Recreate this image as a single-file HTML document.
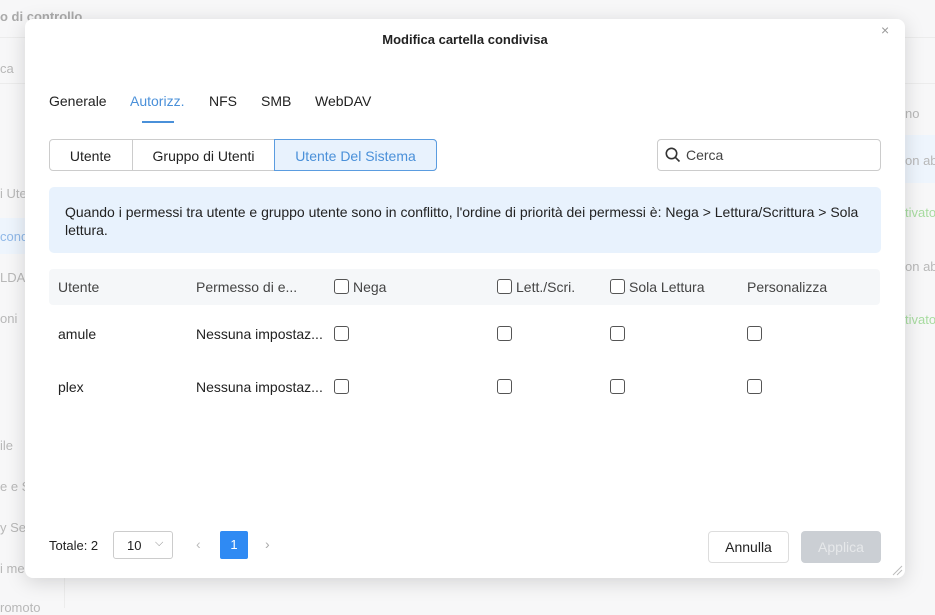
<!DOCTYPE html>
<html><head><meta charset="utf-8"><style>
*{box-sizing:border-box;margin:0;padding:0}
body{width:935px;height:608px;overflow:hidden;background:#f7f7f8;font-family:"Liberation Sans",sans-serif;position:relative;color:#222}
.bg{position:absolute;color:#b8b8b8;font-size:13px;white-space:nowrap}
.modal{position:absolute;left:25px;top:19px;width:880px;height:559px;background:#fff;border-radius:8px;box-shadow:0 4px 20px rgba(0,0,0,.15)}
.a{position:absolute;white-space:nowrap;font-size:14px}
.cb{position:absolute;width:15px;height:15px;border:1px solid #555;border-radius:3px;background:#fff}
</style></head><body>
<div class="bg" style="left:0;top:9px;font-weight:bold;color:#aaa">o di controllo</div>
<div style="position:absolute;left:0;top:37px;width:935px;height:1px;background:#ececec"></div>
<div class="bg" style="left:0;top:61px">ca</div>
<div style="position:absolute;left:0;top:83px;width:935px;height:1px;background:#ececec"></div>
<div class="bg" style="left:0;top:186px">i Ute</div>
<div style="position:absolute;left:0;top:218px;width:25px;height:36px;background:#eef5fd"></div>
<div class="bg" style="left:0;top:229px;color:#8fb8e8">cond</div>
<div class="bg" style="left:0;top:270px">LDA</div>
<div class="bg" style="left:0;top:311px">oni</div>
<div class="bg" style="left:0;top:438px">ile</div>
<div class="bg" style="left:0;top:479px">e e S</div>
<div class="bg" style="left:0;top:520px">y Se</div>
<div class="bg" style="left:0;top:561px">i me</div>
<div class="bg" style="left:0;top:600px">romoto</div>
<div style="position:absolute;left:64px;top:578px;width:1px;height:30px;background:#ececec"></div>
<div class="bg" style="left:905px;top:106px">no</div>
<div style="position:absolute;left:905px;top:135px;width:30px;height:48px;background:#eef5fd"></div>
<div class="bg" style="left:905px;top:153px">on ab</div>
<div class="bg" style="left:905px;top:205px;color:#a8dca0">tivato</div>
<div class="bg" style="left:905px;top:259px">on ab</div>
<div class="bg" style="left:905px;top:312px;color:#a8dca0">tivato</div>

<div class="modal">
<div class="a" style="left:0;width:880px;text-align:center;top:13px;font-weight:bold;font-size:13px">Modifica cartella condivisa</div>
<div class="a" style="left:856px;top:3px;color:#999;font-size:14px">×</div>
<div class="a" style="left:24px;top:74px;font-size:14px">Generale</div>
<div class="a" style="left:105px;top:74px;font-size:14px;color:#4a90d9">Autorizz.</div>
<div style="position:absolute;left:117px;top:102px;width:32px;height:2px;background:#4a90d9"></div>
<div class="a" style="left:184px;top:74px;font-size:14px">NFS</div>
<div class="a" style="left:236px;top:74px;font-size:14px">SMB</div>
<div class="a" style="left:290px;top:74px;font-size:14px">WebDAV</div>

<div style="position:absolute;left:24px;top:120px;width:388px;height:32px;border:1px solid #ccc;border-radius:4px"></div>
<div style="position:absolute;left:107px;top:120px;width:1px;height:32px;background:#ccc"></div>
<div style="position:absolute;left:249px;top:120px;width:163px;height:32px;border:1px solid #5a9ce0;border-radius:0 4px 4px 0;background:#e8f2fd"></div>
<div class="a" style="left:24px;width:83px;text-align:center;top:129px;font-size:14px">Utente</div>
<div class="a" style="left:108px;width:141px;text-align:center;top:129px;font-size:14px">Gruppo di Utenti</div>
<div class="a" style="left:249px;width:163px;text-align:center;top:129px;font-size:14px;color:#4a90d9">Utente Del Sistema</div>

<div style="position:absolute;left:632px;top:120px;width:224px;height:32px;border:1px solid #ccc;border-radius:4px"></div>
<svg style="position:absolute;left:640px;top:128px" width="16" height="16" viewBox="0 0 16 16"><circle cx="6.5" cy="6.5" r="5.2" fill="none" stroke="#333" stroke-width="1.6"/><line x1="10.3" y1="10.3" x2="14.5" y2="14.5" stroke="#333" stroke-width="1.6"/></svg>
<div class="a" style="left:661px;top:128px;font-size:14px;color:#444">Cerca</div>

<div style="position:absolute;left:24px;top:168px;width:832px;height:66px;background:#e8f2fd;border-radius:5px"></div>
<div class="a" style="left:40px;top:184px;white-space:normal;width:800px;line-height:18px;font-size:14px">Quando i permessi tra utente e gruppo utente sono in conflitto, l'ordine di priorità dei permessi è: Nega &gt; Lettura/Scrittura &gt; Sola lettura.</div>

<div style="position:absolute;left:24px;top:250px;width:831px;height:36px;background:#f5f7f9;border-radius:4px"></div>
<div class="a" style="left:33px;top:260px;color:#444">Utente</div>
<div class="a" style="left:171px;top:260px;color:#444">Permesso di e...</div>
<div class="cb" style="left:309px;top:260px"></div><div class="a" style="left:328px;top:260px;color:#444">Nega</div>
<div class="cb" style="left:472px;top:260px"></div><div class="a" style="left:491px;top:260px;color:#444">Lett./Scri.</div>
<div class="cb" style="left:585px;top:260px"></div><div class="a" style="left:604px;top:260px;color:#444">Sola Lettura</div>
<div class="a" style="left:722px;top:260px;color:#444">Personalizza</div>

<div class="a" style="left:33px;top:307px">amule</div>
<div class="a" style="left:171px;top:307px">Nessuna impostaz...</div>
<div class="cb" style="left:309px;top:307px"></div><div class="cb" style="left:472px;top:307px"></div><div class="cb" style="left:585px;top:307px"></div><div class="cb" style="left:722px;top:307px"></div>
<div class="a" style="left:33px;top:360px">plex</div>
<div class="a" style="left:171px;top:360px">Nessuna impostaz...</div>
<div class="cb" style="left:309px;top:360px"></div><div class="cb" style="left:472px;top:360px"></div><div class="cb" style="left:585px;top:360px"></div><div class="cb" style="left:722px;top:360px"></div>

<div class="a" style="left:24px;top:519px;font-size:13px">Totale: 2</div>
<div style="position:absolute;left:88px;top:512px;width:60px;height:28px;border:1px solid #ccc;border-radius:3px"></div>
<div class="a" style="left:102px;top:519px;font-size:13px">10</div>
<div class="a" style="left:130px;top:518px;color:#888;font-size:11px">⌵</div>
<div class="a" style="left:171px;top:517px;color:#bbb">‹</div>
<div style="position:absolute;left:195px;top:512px;width:28px;height:28px;background:#2f8af3;border-radius:2px;color:#fff;font-size:13px;text-align:center;line-height:28px">1</div>
<div class="a" style="left:240px;top:517px;color:#aaa">›</div>
<div style="position:absolute;left:683px;top:512px;width:81px;height:32px;border:1px solid #ddd;border-radius:4px;text-align:center;line-height:30px;font-size:14px">Annulla</div>
<div style="position:absolute;left:776px;top:512px;width:80px;height:32px;background:#cbcfd4;border-radius:4px;text-align:center;line-height:32px;font-size:14px;color:#e6e8ea">Applica</div>
<svg style="position:absolute;left:866px;top:545px" width="12" height="12"><line x1="2" y1="11" x2="11" y2="2" stroke="#bbb"/><line x1="6" y1="11" x2="11" y2="6" stroke="#bbb"/></svg>
</div>
</body></html>
